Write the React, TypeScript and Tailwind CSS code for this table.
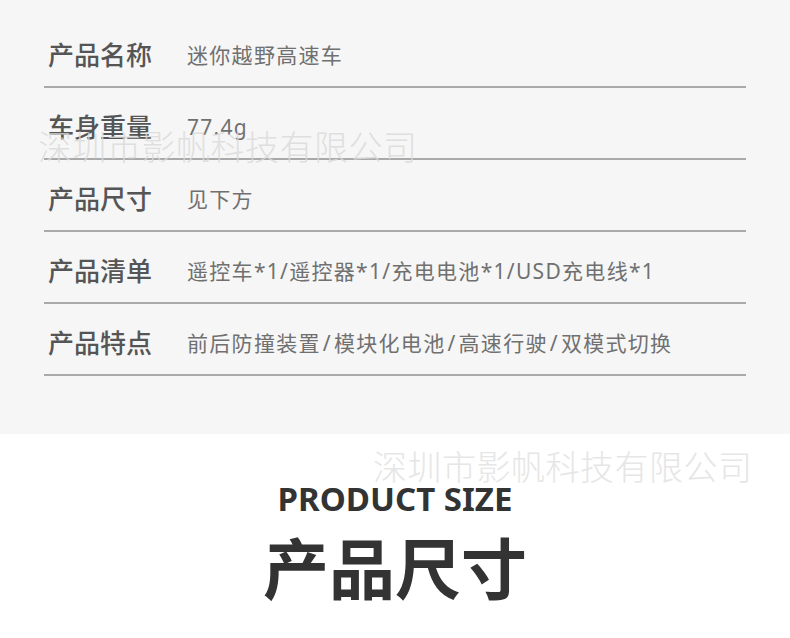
import React from "react";

const rows = [
  { label: "产品名称", value: "迷你越野高速车" },
  { label: "车身重量", value: "77.4g" },
  { label: "产品尺寸", value: "见下方" },
  { label: "产品清单", value: "遥控车*1/遥控器*1/充电电池*1/USD充电线*1" },
  { label: "产品特点", value: "前后防撞装置/模块化电池/高速行驶/双模式切换" },
];

const font = "font-['Noto_Sans','Noto_Sans_CJK_SC',sans-serif]";

const Watermark = ({ className }: { className: string }) => (
  <div
    aria-hidden
    className={`absolute pointer-events-none whitespace-nowrap text-[34px] font-light leading-none tracking-[0.5px] ${className}`}
  >
    深圳市影帆科技有限公司
  </div>
);

// a slash between two CJK words gets a bit more room, like the source
const Value = ({ text }: { text: string }) => {
  const parts = text.split("/");
  return (
    <span className="text-[21px] leading-none tracking-[1.3px] text-[#707070]">
      {parts.map((p, i) => {
        const prev = parts[i - 1] ?? "";
        const wide = /[^\x00-\x7f]$/.test(prev);
        return (
          <React.Fragment key={i}>
            {i > 0 && <span className={wide ? "mx-[2px]" : ""}>/</span>}
            {p}
          </React.Fragment>
        );
      })}
    </span>
  );
};

export default function App() {
  return (
    <div className={`w-[790px] h-[638px] overflow-hidden bg-white ${font}`}>
      {/* spec table */}
      <section className="relative h-[434px] bg-[#f6f6f6] pt-4">
        <div className="mx-[44px] flex flex-col">
          {rows.map((row) => (
            <div
              key={row.label}
              className="flex h-[72px] items-center border-b-2 border-[#a9a9a9] pt-2"
            >
              <span className="w-[143px] pl-1 text-[26px] font-medium leading-none text-[#555]">
                {row.label}
              </span>
              <Value text={row.value} />
            </div>
          ))}
        </div>
        <Watermark className="left-[38px] top-[130px] text-[#d9d9d9]/80" />
      </section>

      {/* heading */}
      <section className="relative flex flex-col items-center pt-[48px]">
        <Watermark className="left-[373px] top-[16px] text-[#e6e6e6]" />
        <h2 className="relative text-[33px] font-bold leading-none text-[#333]">PRODUCT SIZE</h2>
        <h1 className="mt-[20px] text-[66px] font-bold leading-none text-[#333]">产品尺寸</h1>
      </section>
    </div>
  );
}
